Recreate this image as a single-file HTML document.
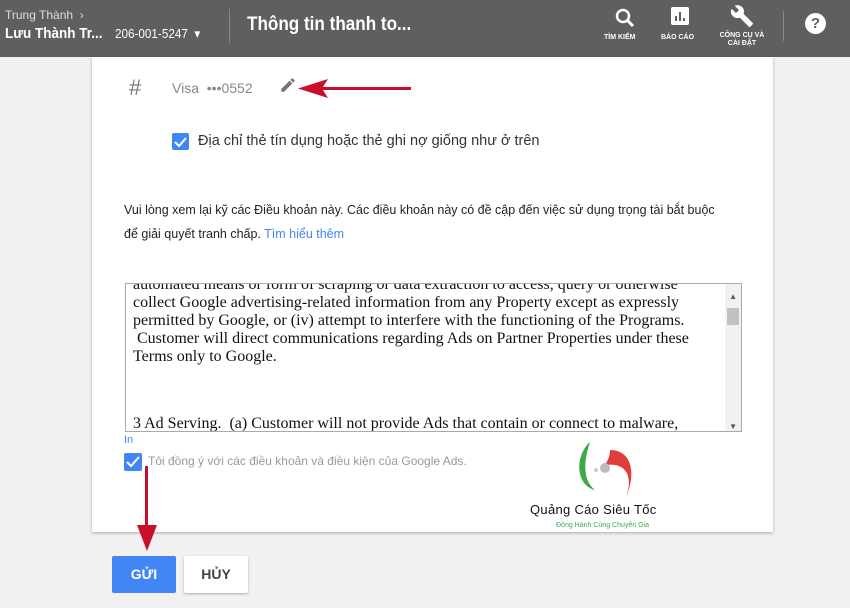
<!DOCTYPE html>
<html><head><meta charset="utf-8"><style>
*{margin:0;padding:0;box-sizing:border-box}
body{width:850px;height:608px;background:#f1f1f1;font-family:"Liberation Sans",sans-serif;position:relative;overflow:hidden}
.top{position:absolute;left:0;top:0;width:850px;height:57px;background:#5f5f5f;color:#fff}
.a{position:absolute}
.card{position:absolute;left:92px;top:57px;width:681px;height:475px;background:#fff;box-shadow:0 1px 3px rgba(0,0,0,.3)}
.cb{position:absolute;width:17px;height:17px;background:#4285f4;border-radius:2px}
.cb svg{position:absolute;left:1px;top:1px}
.ta{position:absolute;left:125px;top:283px;width:617px;height:149px;border:1px solid #aaa;overflow:hidden;font-family:"Liberation Serif",serif;font-size:16px;line-height:18px;color:#111;padding-left:7px;background:#fff;white-space:nowrap}
.btn{position:absolute;top:556px;height:37px;border-radius:2px;font-size:14px;font-weight:bold;text-align:center;line-height:37px}
</style></head><body>
<div class="top">
 <div class="a" style="left:5px;top:8px;font-size:12px;color:#ddd">Trung Thành &nbsp;›</div>
 <div class="a" style="left:5px;top:25px;font-size:15px;font-weight:bold;transform:scaleX(.9);transform-origin:left">Lưu Thành Tr...</div>
 <div class="a" style="left:115px;top:26px;font-size:13px;transform:scaleX(.9);transform-origin:left">206-001-5247 &nbsp;▾</div>
 <div class="a" style="left:229px;top:9px;width:1px;height:34px;background:#888"></div>
 <div class="a" style="left:247px;top:14px;font-size:19px;font-weight:bold;transform:scaleX(.9);transform-origin:left">Thông tin thanh to...</div>
 <svg class="a" style="left:614px;top:7px" width="22" height="22" viewBox="0 0 22 22"><circle cx="9" cy="9" r="6" fill="none" stroke="#fff" stroke-width="2.5"/><path d="M13 13l6 6" stroke="#fff" stroke-width="3"/></svg>
 <div class="a" style="left:604px;top:34px;font-size:7px;font-weight:bold">TÌM KIẾM</div>
 <svg class="a" style="left:671px;top:7px" width="18" height="18"><rect width="18" height="18" rx="2" fill="#fff"/><path d="M5 14v-5M9 14V5M13 14v-3" stroke="#5f5f5f" stroke-width="2"/></svg>
 <div class="a" style="left:661px;top:34px;font-size:7px;font-weight:bold">BÁO CÁO</div>
 <svg class="a" style="left:730px;top:4px" width="24" height="24" viewBox="0 0 24 24"><path d="M22.7 19l-9.1-9.1c.9-2.3.4-5-1.5-6.9-2-2-5-2.4-7.4-1.3L9 6 6 9 1.6 4.7C.4 7.1.9 10.1 2.9 12.1c1.9 1.9 4.6 2.4 6.9 1.5l9.1 9.1c.4.4 1 .4 1.4 0l2.3-2.3c.5-.4.5-1.1.1-1.4z" fill="#fff"/></svg>
 <div class="a" style="left:714px;top:32px;font-size:7px;font-weight:bold;text-align:center;width:56px;line-height:8px">CÔNG CỤ VÀ<br>CÀI ĐẶT</div>
 <div class="a" style="left:783px;top:11px;width:1px;height:30px;background:#888"></div>
 <div class="a" style="left:805px;top:13px;width:21px;height:21px;border-radius:50%;background:#fff;color:#5f5f5f;font-weight:bold;font-size:15px;text-align:center;line-height:21px">?</div>
</div>
<div class="card">
 <div class="a" style="left:37px;top:18px;font-size:22px;color:#777">#</div>
 <div class="a" style="left:80px;top:23px;font-size:14px;color:#888">Visa &nbsp;•••0552</div>
 <svg class="a" style="left:187px;top:19px" width="18" height="18" viewBox="0 0 24 24"><path d="M3 17.25V21h3.75L17.8 9.94l-3.75-3.75L3 17.25zM20.7 7.04a1 1 0 000-1.41l-2.34-2.34a1 1 0 00-1.41 0l-1.83 1.83 3.75 3.75 1.83-1.83z" fill="#777"/></svg>
 <div class="cb" style="left:80px;top:76px"><svg width="15" height="15"><path d="M2 8l4 4 7-8" stroke="#fff" stroke-width="2" fill="none"/></svg></div>
 <div class="a" style="left:106px;top:76px;font-size:14.5px;color:#333">Địa chỉ thẻ tín dụng hoặc thẻ ghi nợ giống như ở trên</div>
 <div class="a" style="left:32px;top:141px;font-size:12.5px;line-height:24px;color:#222;width:630px">Vui lòng xem lại kỹ các Điều khoản này. Các điều khoản này có đề cập đến việc sử dụng trọng tài bắt buộc<br>để giải quyết tranh chấp. <span style="color:#4285f4">Tìm hiểu thêm</span></div>
</div>
<div class="ta">
 <div style="margin-top:-8px">automated means or form of scraping or data extraction to access, query or otherwise<br>collect Google advertising-related information from any Property except as expressly<br>permitted by Google, or (iv) attempt to interfere with the functioning of the Programs.<br>&nbsp;Customer will direct communications regarding Ads on Partner Properties under these<br>Terms only to Google.</div>
 <div class="a" style="left:7px;top:131px">3 Ad Serving. &nbsp;(a) Customer will not provide Ads that contain or connect to malware,</div>
 <div class="a" style="right:0;top:0;width:16px;height:147px;background:#f1f1f1"></div>
 <div class="a" style="right:4px;top:4px;font-size:8px;color:#555">▲</div>
 <div class="a" style="right:2px;top:24px;width:12px;height:17px;background:#c1c1c1"></div>
 <div class="a" style="right:4px;top:134px;font-size:8px;color:#555">▼</div>
</div>
<div class="a" style="left:124px;top:434px;font-size:11px;color:#4285f4">In</div>
<div class="cb" style="left:124px;top:453px;width:18px;height:18px"><svg width="16" height="16"><path d="M2 8l4 4 8-9" stroke="#fff" stroke-width="2" fill="none"/></svg></div>
<div class="a" style="left:148px;top:454px;font-size:12px;color:#999">Tôi đồng ý với các điều khoản và điều kiện của Google Ads.</div>
<svg class="a" style="left:570px;top:440px" width="70" height="65" viewBox="0 0 70 65"><path d="M20 2C5 15 5 45 25 50 12 40 14 20 20 2z" fill="#3daa4a"/><path d="M40 10c20 0 28 20 15 50 10-25 0-38-20-35 5-8 5-12 5-15z" fill="#e03c3c"/><circle cx="35" cy="28" r="5" fill="#bbb"/><circle cx="26" cy="30" r="2" fill="#ccc"/></svg>
<div class="a" style="left:530px;top:502px;font-size:13px;color:#111;letter-spacing:.3px">Quảng Cáo Siêu Tốc</div>
<div class="a" style="left:556px;top:522px;font-size:7px;color:#3daa4a">Đồng Hành Cùng Chuyên Gia</div>
<div class="a" style="left:145px;top:466px;width:3px;height:70px;background:#c8102e"></div>
<svg class="a" style="left:137px;top:525px" width="20" height="26"><path d="M0 0l10 26L20 0z" fill="#c8102e"/></svg>
<div class="a" style="left:305px;top:87px;width:106px;height:3px;background:#c8102e"></div>
<svg class="a" style="left:298px;top:79px" width="30" height="19"><path d="M0 9.5L30 0 24 9.5 30 19z" fill="#c8102e"/></svg>
<div class="btn" style="left:112px;width:64px;background:#4285f4;color:#fff">GỬI</div>
<div class="btn" style="left:184px;width:64px;background:#fff;color:#444;box-shadow:0 1px 2px rgba(0,0,0,.3)">HỦY</div>
</body></html>
